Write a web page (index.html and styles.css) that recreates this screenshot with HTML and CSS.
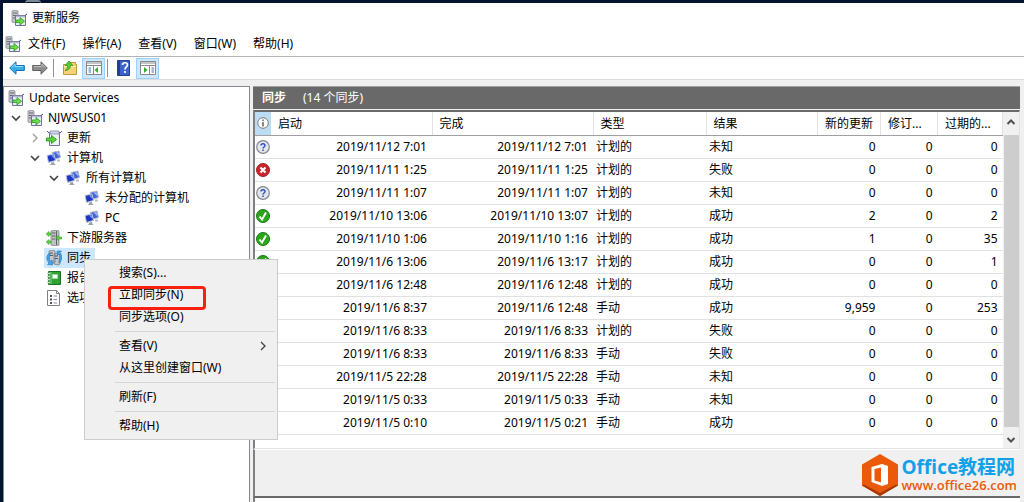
FILE: index.html
```html
<!DOCTYPE html>
<html lang="zh-CN">
<head>
<meta charset="utf-8">
<title>更新服务</title>
<link rel="stylesheet" href="styles.css">
</head>
<body>
<svg class="sprite" aria-hidden="true">
  <symbol id="i-wsus" viewBox="0 0 16 16">
    <path d="M1 1l4-1 2 1v11l-2 1-4-1z" fill="#c4c8cc" stroke="#85898d" stroke-width=".8"/>
    <path d="M2 3h4M2 5.500h4M2 8h4" stroke="#62676d"/>
    <path d="M4.500 5.500h10v10h-10z" fill="#eceef5" stroke="#70719e"/>
    <path d="M5 6.500h9" stroke="#b5b6d6" stroke-width="1.500"/>
    <path d="M14 5.500l2-1.500" stroke="#4b4b70"/>
    <path d="M5 10h4V7.500l4.500 3.700L9 15v-2.500H5z" fill="#6fdc4c" stroke="#239a1c" stroke-width=".8"/>
  </symbol>
  <symbol id="i-update" viewBox="0 0 16 16">
    <path d="M3.500 2.500h10v13h-10z" fill="#eef0f7" stroke="#70719e"/>
    <path d="M4 1h9v3H4z" fill="#d3d5e8" stroke="#8788b0" stroke-width=".8"/>
    <path d="M3 3L1 1M14 3l2-2" stroke="#55567c"/>
    <path d="M.5 8h5V5.500L10.500 9.500l-5 4V11h-5z" fill="#5ed33a" stroke="#239a1c" stroke-width=".9"/>
  </symbol>
  <symbol id="i-pcs" viewBox="0 0 16 16">
    <path d="M6 2.500L13 1l1.500 6.500-6.500 2z" fill="#4465d8" stroke="#b6bccb"/>
    <path d="M9.500 2.500L12.500 2l1 4.500z" fill="#9db9ff"/>
    <path d="M11 9.500h3v2h-3z" fill="#b8bcc5"/>
    <path d="M1 5.500L8 4l1.500 6.500-7 2z" fill="#1c35c4" stroke="#c2c8d6"/>
    <path d="M5 5.500L7.500 5l1 4z" fill="#819ff5"/>
    <path d="M5 12.500l3-.5.5 2H5zM3.500 15h6.500l-1.500-1H5z" fill="#9da3ac"/>
  </symbol>
  <symbol id="i-down" viewBox="0 0 16 16">
    <path d="M5 1l5-1 3 1v14l-3 1-5-1z" fill="#bfc3c6" stroke="#7f8487" stroke-width=".8"/>
    <path d="M6 3h3.500M6 6h3.500M6 9h3.500M10.500 1v14" stroke="#5e6367"/>
    <path d="M0 4l3-2.500V3h2v2H3v1.500zM0 12l3-2.500V11h2v2H3v1.500zM10 7.500L12.500 5.500V7H16v2h-3.500v1.500z" fill="#65cf43" stroke="#2c9a20" stroke-width=".5"/>
  </symbol>
  <symbol id="i-sync" viewBox="0 0 16 16">
    <path d="M3 1l4-1 2 1v11l-2 1-4-1zM8 4l4-1 2 1v10l-2 1-4-1z" fill="#c4c9ce" stroke="#72797f" stroke-width=".8"/>
    <path d="M4 3h3M4 5.500h3M9 6h3M9 8.500h3" stroke="#575d63"/>
    <path d="M4 3C0 5 0 10 3 13l-1.500 1.500L6.500 15 6 10l-1.500 1.500C2.500 9 3 7 4 5zM11 1l.5 4.500L13 4c1.500 2 1 4 0 6v3c4-3 3-8 1-10.500L15.500 1z" fill="#4ea5e7" stroke="#2269ae" stroke-width=".6"/>
  </symbol>
  <symbol id="i-report" viewBox="0 0 16 16">
    <path d="M2.500 1.500h12v13h-12z" fill="#2da334" stroke="#187321"/>
    <path d="M6.500 4.500h5v4h-5z" fill="#fff" stroke="#9cdca0"/>
    <path d="M5 2v12" stroke="#86d188"/>
    <path d="M1 3.500h3M1 6.500h3M1 9.500h3M1 12.500h3" stroke="#cdd5cd" stroke-width="1.500"/>
  </symbol>
  <symbol id="i-options" viewBox="0 0 16 16">
    <path d="M1.500.5h9l3 3v12h-12z" fill="#fff" stroke="#808080"/>
    <path d="M10.500.5v3h3" fill="none" stroke="#808080"/>
    <path d="M4 5h2v2H4zM4 8.500h2v2H4zM4 12h2v2H4z" fill="#53535e"/>
    <path d="M7.500 6H11M7.500 9.500H11M7.500 13H11" stroke="#8c8caf"/>
  </symbol>
  <symbol id="i-back" viewBox="0 0 16 14">
    <path d="M.7 7L7 .8v3.700h8.300v5H7v3.700z" fill="#35aeea" stroke="#1771b5"/>
    <path d="M2.500 6.500L6 3v2.500h8" fill="none" stroke="#94dcfb"/>
  </symbol>
  <symbol id="i-forward" viewBox="0 0 16 14">
    <path d="M15.300 7L9 .8v3.700H.7v5H9v3.700z" fill="#8d8d8d" stroke="#626262"/>
    <path d="M2 5.500h8V3l3.500 3.500" fill="none" stroke="#bdbdbd"/>
  </symbol>
  <symbol id="i-folder" viewBox="0 0 16 16">
    <path d="M1.500 4.500h5l1-2h6v2h1v10h-13z" fill="#f4d377" stroke="#bd983d"/>
    <path d="M2 6.500h12" stroke="#fff0b8"/>
    <path d="M3 10.500c2-1 2.500-3 2.500-5H3L7 1l4 4.500H8.500C8.500 8 7 10.500 3 10.500z" fill="#57c934" stroke="#2b9221" stroke-width=".7"/>
  </symbol>
  <symbol id="i-tree-pane" viewBox="0 0 16 14">
    <path d="M.5.5h15v13H.5z" fill="#fff" stroke="#85898f"/>
    <path d="M1 2h14M1 4.500h14" stroke="#85898f"/>
    <path d="M7.500 5v9" stroke="#85898f"/>
    <path d="M2.500 7H5M2.500 9H5M2.500 11H5" stroke="#3978b8"/>
    <path d="M12 6v6L8.500 9z" fill="#36a92e"/>
  </symbol>
  <symbol id="i-action-pane" viewBox="0 0 16 14">
    <path d="M.5.5h15v13H.5z" fill="#fff" stroke="#85898f"/>
    <path d="M1 2h14M1 4.500h14" stroke="#85898f"/>
    <path d="M9.500 5v9" stroke="#85898f"/>
    <path d="M11.500 7H14M11.500 9H14M11.500 11H14" stroke="#3978b8"/>
    <path d="M4 6v6l3.500-3z" fill="#36a92e"/>
  </symbol>
  <symbol id="i-help" viewBox="0 0 14 16">
    <path d="M.5.5h12v15H.5z" fill="#3e63cc" stroke="#263f91"/>
    <path d="M1 1h2v14H1z" fill="#243c92"/>
    <path d="M5.500 5c0-3 5-3 5 0 0 2-2.500 2-2.500 4.500M8 11v2" fill="none" stroke="#fff" stroke-width="1.700"/>
  </symbol>
  <symbol id="i-open" viewBox="0 0 10 10"><path d="M1 3l4 4 4-4" fill="none" stroke="#404040" stroke-width="1.600"/></symbol>
  <symbol id="i-closed" viewBox="0 0 10 10"><path d="M3 1l4 4-4 4" fill="none" stroke="#a0a0a0" stroke-width="1.400"/></symbol>
  <symbol id="i-info" viewBox="0 0 14 14">
    <circle cx="7" cy="7" r="5.300" fill="#fff" stroke="#7b7b7b"/>
    <path d="M7 3.500V5M7 6v4.500" stroke="#444" stroke-width="1.300"/>
  </symbol>
  <symbol id="i-unknown" viewBox="0 0 14 14">
    <circle cx="7" cy="7" r="6.300" fill="#e3e6ec" stroke="#838891" stroke-width="1.200"/>
    <path d="M5 5.500c0-2.500 4-2.500 4 0C9 7 7 7 7 8.500M7 9.500V11" fill="none" stroke="#3151c4" stroke-width="1.500"/>
  </symbol>
  <symbol id="i-fail" viewBox="0 0 14 14">
    <circle cx="7" cy="7" r="6.500" fill="#cb2329" stroke="#9d2529"/>
    <path d="M4.500 4.500l5 5M9.500 4.500l-5 5" stroke="#fff" stroke-width="2.200"/>
  </symbol>
  <symbol id="i-ok" viewBox="0 0 14 14">
    <circle cx="7" cy="7" r="6.500" fill="#2aa61b" stroke="#187b16"/>
    <path d="M3.500 7.500L6 10.500 10 3.500" fill="none" stroke="#fff" stroke-width="1.900"/>
  </symbol>
</svg>
<span class="desktop-icon"></span>

<div class="window">
  <header class="title"><svg class="icon"><use href="#i-wsus"/></svg><span>更新服务</span></header>
  <nav class="menubar">
    <svg class="icon"><use href="#i-wsus"/></svg>
    <button>文件(F)</button><button>操作(A)</button><button>查看(V)</button><button>窗口(W)</button><button>帮助(H)</button>
  </nav>
  <div class="toolbar">
    <button class="tool" aria-label="后退"><svg class="icon"><use href="#i-back"/></svg></button>
    <button class="tool" aria-label="前进"><svg class="icon"><use href="#i-forward"/></svg></button>
    <span class="divider"></span>
    <button class="tool" aria-label="向上"><svg class="icon"><use href="#i-folder"/></svg></button>
    <button class="tool on" aria-label="控制台树"><svg class="icon"><use href="#i-tree-pane"/></svg></button>
    <span class="divider"></span>
    <button class="tool" aria-label="帮助"><svg class="icon"><use href="#i-help"/></svg></button>
    <button class="tool on" aria-label="操作窗格"><svg class="icon"><use href="#i-action-pane"/></svg></button>
  </div>

  <main class="body">
    <aside class="side">
      <ul class="tree">
        <li><div class="node root"><svg class="icon"><use href="#i-wsus"/></svg><span>Update Services</span></div>
          <ul>
            <li><div class="node"><svg class="caret"><use href="#i-open"/></svg><svg class="icon"><use href="#i-wsus"/></svg><span>NJWSUS01</span></div>
              <ul>
                <li><div class="node"><svg class="caret"><use href="#i-closed"/></svg><svg class="icon"><use href="#i-update"/></svg><span>更新</span></div></li>
                <li><div class="node"><svg class="caret"><use href="#i-open"/></svg><svg class="icon"><use href="#i-pcs"/></svg><span>计算机</span></div>
                  <ul>
                    <li><div class="node"><svg class="caret"><use href="#i-open"/></svg><svg class="icon"><use href="#i-pcs"/></svg><span>所有计算机</span></div>
                      <ul>
                        <li><div class="node leaf"><svg class="icon"><use href="#i-pcs"/></svg><span>未分配的计算机</span></div></li>
                        <li><div class="node leaf"><svg class="icon"><use href="#i-pcs"/></svg><span>PC</span></div></li>
                      </ul>
                    </li>
                  </ul>
                </li>
                <li><div class="node leaf"><svg class="icon"><use href="#i-down"/></svg><span>下游服务器</span></div></li>
                <li><div class="node leaf selected"><svg class="icon"><use href="#i-sync"/></svg><span>同步</span></div></li>
                <li><div class="node leaf"><svg class="icon"><use href="#i-report"/></svg><span>报告</span></div></li>
                <li><div class="node leaf"><svg class="icon"><use href="#i-options"/></svg><span>选项</span></div></li>
              </ul>
            </li>
          </ul>
        </li>
      </ul>
    </aside>

    <section class="content">
      <h1 class="heading"><b>同步</b><span>(14 个同步)</span></h1>
      <div class="list">
        <table class="grid">
          <colgroup><col class="c-icon"><col class="c-time"><col class="c-time"><col class="c-type"><col><col class="c-new"><col class="c-rev"><col class="c-exp"></colgroup>
          <thead><tr><th class="mark"><svg class="status"><use href="#i-info"/></svg></th><th>启动</th><th>完成</th><th>类型</th><th>结果</th><th>新的更新</th><th>修订...</th><th>过期的...</th></tr></thead>
          <tbody>
            <tr><td class="st"><svg class="status"><use href="#i-unknown"/></svg></td><td class="r">2019/11/12 7:01</td><td class="r">2019/11/12 7:01</td><td>计划的</td><td>未知</td><td class="r">0</td><td class="r">0</td><td class="r">0</td></tr>
            <tr><td class="st"><svg class="status"><use href="#i-fail"/></svg></td><td class="r">2019/11/11 1:25</td><td class="r">2019/11/11 1:25</td><td>计划的</td><td>失败</td><td class="r">0</td><td class="r">0</td><td class="r">0</td></tr>
            <tr><td class="st"><svg class="status"><use href="#i-unknown"/></svg></td><td class="r">2019/11/11 1:07</td><td class="r">2019/11/11 1:07</td><td>计划的</td><td>未知</td><td class="r">0</td><td class="r">0</td><td class="r">0</td></tr>
            <tr><td class="st"><svg class="status"><use href="#i-ok"/></svg></td><td class="r">2019/11/10 13:06</td><td class="r">2019/11/10 13:07</td><td>计划的</td><td>成功</td><td class="r">2</td><td class="r">0</td><td class="r">2</td></tr>
            <tr><td class="st"><svg class="status"><use href="#i-ok"/></svg></td><td class="r">2019/11/10 1:06</td><td class="r">2019/11/10 1:16</td><td>计划的</td><td>成功</td><td class="r">1</td><td class="r">0</td><td class="r">35</td></tr>
            <tr><td class="st"><svg class="status"><use href="#i-ok"/></svg></td><td class="r">2019/11/6 13:06</td><td class="r">2019/11/6 13:17</td><td>计划的</td><td>成功</td><td class="r">0</td><td class="r">0</td><td class="r">1</td></tr>
            <tr><td class="st"><svg class="status"><use href="#i-ok"/></svg></td><td class="r">2019/11/6 12:48</td><td class="r">2019/11/6 12:48</td><td>计划的</td><td>成功</td><td class="r">0</td><td class="r">0</td><td class="r">0</td></tr>
            <tr><td class="st"><svg class="status"><use href="#i-ok"/></svg></td><td class="r">2019/11/6 8:37</td><td class="r">2019/11/6 12:48</td><td>手动</td><td>成功</td><td class="r">9,959</td><td class="r">0</td><td class="r">253</td></tr>
            <tr><td class="st"><svg class="status"><use href="#i-fail"/></svg></td><td class="r">2019/11/6 8:33</td><td class="r">2019/11/6 8:33</td><td>计划的</td><td>失败</td><td class="r">0</td><td class="r">0</td><td class="r">0</td></tr>
            <tr><td class="st"><svg class="status"><use href="#i-fail"/></svg></td><td class="r">2019/11/6 8:33</td><td class="r">2019/11/6 8:33</td><td>手动</td><td>失败</td><td class="r">0</td><td class="r">0</td><td class="r">0</td></tr>
            <tr><td class="st"><svg class="status"><use href="#i-unknown"/></svg></td><td class="r">2019/11/5 22:28</td><td class="r">2019/11/5 22:28</td><td>手动</td><td>未知</td><td class="r">0</td><td class="r">0</td><td class="r">0</td></tr>
            <tr><td class="st"><svg class="status"><use href="#i-unknown"/></svg></td><td class="r">2019/11/5 0:33</td><td class="r">2019/11/5 0:33</td><td>手动</td><td>未知</td><td class="r">0</td><td class="r">0</td><td class="r">0</td></tr>
            <tr><td class="st"></td><td class="r">2019/11/5 0:10</td><td class="r">2019/11/5 0:21</td><td>手动</td><td>成功</td><td class="r">0</td><td class="r">0</td><td class="r">0</td></tr>
          </tbody>
        </table>
        <div class="scroll">
          <svg class="arrow" viewBox="0 0 10 10"><path d="M1.500 7L5 3.500 8.500 7" fill="none" stroke="#505050" stroke-width="2"/></svg>
          <div class="thumb"></div>
          <svg class="arrow" viewBox="0 0 10 10"><path d="M1.500 3L5 6.500 8.500 3" fill="none" stroke="#505050" stroke-width="2"/></svg>
        </div>
      </div>
      <div class="detail"></div>
      <div class="below"></div>
    </section>
  </main>
</div>

<div class="context">
  <button>搜索(S)...</button>
  <button>立即同步(N)</button>
  <button>同步选项(O)</button>
  <hr>
  <button>查看(V)<svg class="caret" viewBox="0 0 10 10"><path d="M3 1l4 4-4 4" fill="none" stroke="#404040" stroke-width="1.300"/></svg></button>
  <button>从这里创建窗口(W)</button>
  <hr>
  <button>刷新(F)</button>
  <hr>
  <button>帮助(H)</button>
  <span class="highlight"></span>
</div>

<div class="brand">
  <svg class="hex" viewBox="0 0 36 42">
    <path d="M18 0l18 10.500v21L18 42 0 31.500v-21z" fill="#eb5a0b"/>
    <path d="M18 42L0 31.500l2-1 16 8.500 16-8.500 2 1z" fill="#a93a05"/>
    <path d="M9.500 13L20 10l6 2v18l-6 2-10.500-4zM12.500 15v11.500L19 28.500V13.500z" fill="#fff" fill-rule="evenodd"/>
  </svg>
  <div><div class="name">Office教程网</div><div class="url">www.office26.com</div></div>
</div>
</body>
</html>
```
FILE: styles.css
```css
* { box-sizing: border-box; }
body {
  position: relative;
  display: flex;
  min-height: 100vh;
  margin: 0;
  padding: 3px 0 0 3px;
  overflow: hidden;
  background: #02142f;
  color: #000;
  font: 12px/20px "Noto Sans", "Noto Sans CJK SC", sans-serif;
}
button { border: 0; background: none; padding: 0; font: inherit; color: inherit; text-align: left; }
ul { list-style: none; margin: 0; padding: 0; }
.sprite { position: absolute; width: 0; height: 0; }
.desktop-icon { position: absolute; left: 25px; top: 0; width: 16px; height: 3px; border-top: 2px solid #7d8794; border-radius: 8px 8px 0 0; }
.icon { width: 16px; height: 16px; flex: none; }
.caret { width: 10px; height: 10px; flex: none; }

.window { position: relative; flex: 1; display: flex; flex-direction: column; min-width: 0; background: #f0f0f0; }
.title { display: flex; align-items: center; gap: 5px; height: 29px; padding-left: 8px; background: #fff; }
.menubar { display: flex; align-items: center; gap: 17px; height: 25px; padding-left: 2px; background: #fff; border-bottom: 1px solid #b4b4b4; }
.menubar .icon { margin-right: -10px; }
.toolbar { display: flex; align-items: center; height: 23px; padding-left: 2px; background: #fff; border-bottom: 1px solid #dcdcdc; }
.tool { display: flex; align-items: center; justify-content: center; width: 23px; height: 21px; }
.tool.on { margin-left: 1px; background: #cce8ff; border: 1px solid #99d1ff; }
.divider { width: 1px; height: 18px; margin: 0 2px; background: #909090; }
.divider + .tool { margin-left: 2px; }

.body { flex: 1; display: flex; gap: 3px; padding: 6px 4px 0 0; }
.side { width: 247px; flex: none; background: #fff; border: 1px solid #828790; border-bottom: 0; padding: 1px 0 0 4px; }
.tree ul ul { padding-left: 19px; }
.node { display: flex; align-items: center; height: 20px; width: max-content; white-space: nowrap; }
.node .icon { margin: 0 5px 0 6px; }
.node .caret { margin-left: 3px; }
.node.root .icon { margin-left: 0; }
.node.leaf { margin-left: 17px; }
.node.leaf .icon { margin-left: 2px; }
.node.selected { background: #cce8ff; padding-right: 4px; }

.content { flex: 1; min-width: 0; display: flex; flex-direction: column; }
.heading { display: flex; align-items: center; gap: 17px; height: 23px; margin: 0 0 1px; padding-left: 9px; background: #696969; border-top: 1px solid #a0a0a0; color: #fff; font-size: 12px; font-weight: 400; }
.list { display: flex; align-items: flex-start; height: 339px; background: #fff; border: 2px solid #696969; border-width: 2px 1px 1px 2px; border-color: #696969 #e3e3e3 #e3e3e3 #808080; }
.grid { flex: 1; min-width: 0; border-collapse: collapse; table-layout: fixed; }
.c-icon { width: 16px; } .c-time { width: 161px; } .c-type { width: 113px; }
.c-new { width: 63px; } .c-rev { width: 57px; } .c-exp { width: 65px; }
.grid th { height: 23px; padding: 1px 0 0 7px; text-align: left; font-weight: 400; white-space: nowrap; border-right: 1px solid #e2e2e2; border-bottom: 1px solid #a0a0a0; }
.grid th.mark { padding: 0 0 0 1px; background: #bcdcf4; border-right: 0; }
.grid td { height: 23px; padding: 0 3px; line-height: 20px; white-space: nowrap; border-bottom: 1px solid #e0e0e0; }
.grid td.r { text-align: right; padding-right: 5px; }
.grid td.st { padding: 0 0 0 1px; }
.status { display: block; width: 14px; height: 14px; }
.scroll { width: 16px; align-self: stretch; display: flex; flex-direction: column; align-items: center; gap: 8px; padding: 5px 0 3px; background: #f0f0f0; }
.arrow { width: 10px; height: 10px; flex: none; }
.thumb { flex: 1; width: 100%; background: #cdcdcd; border-left: 1px solid #f0f0f0; }
.detail { height: 49px; border: 1px solid #fff; border-width: 1px 0 0 2px; border-left-color: #808080; border-bottom: 2px solid #696969; }
.below { flex: 1; background: #fff; border-left: 2px solid #808080; }

.context { position: absolute; left: 84px; top: 259px; width: 194px; padding: 2px; background: #f0f0f0; border: 1px solid #ccc; }
.context button { display: flex; align-items: center; justify-content: space-between; width: 100%; height: 22px; padding: 0 7px 0 32px; }
.context hr { height: 1px; margin: 3px 0 3px 28px; border: 0; background: #d4d4d4; }
.highlight { position: absolute; left: 23px; top: 26px; width: 98px; height: 24px; border: 3px solid #fa2010; border-radius: 4px; }

.brand { position: absolute; right: 7px; bottom: 6px; display: flex; align-items: center; gap: 4px; font-family: "Open Sans", "Noto Sans CJK SC", sans-serif; font-weight: 700; white-space: nowrap; }
.hex { width: 36px; height: 42px; }
.name { color: #12a0e8; font-size: 19px; line-height: 20px; }
.url { color: #eb5a0b; font-size: 13px; font-weight: 600; line-height: 16px; }
```
